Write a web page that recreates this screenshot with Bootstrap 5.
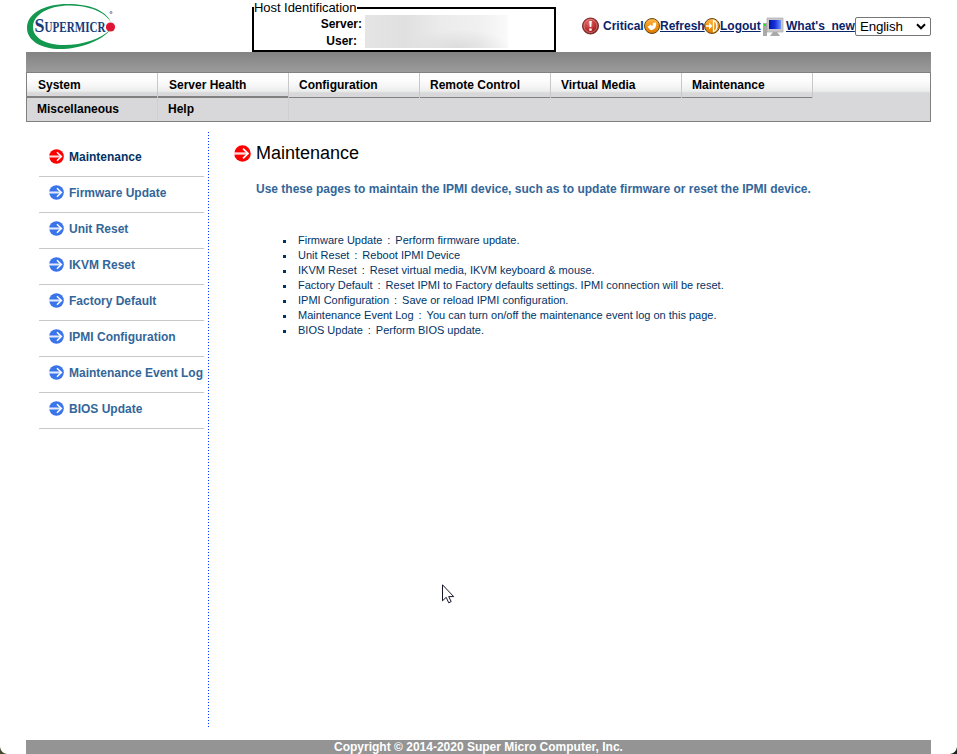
<!DOCTYPE html>
<html lang="en">
<head>
<meta charset="utf-8">
<meta name="viewport" content="width=device-width, initial-scale=1">
<title>Supermicro IPMI - Maintenance</title>
<link href="https://cdn.jsdelivr.net/npm/bootstrap@5.3.0/dist/css/bootstrap.min.css" rel="stylesheet">
<style>
body{font-family:"Liberation Sans",Arial,sans-serif;font-size:12px;line-height:16px;color:#000;background:#fff}
.page{width:905px;height:754px;margin-left:26px}
.masthead{height:52px}
.hostbox{width:304px;height:45px;margin:7px 0 0 134px;border:2px solid #000}
.host-title{left:0;top:-9px;line-height:16px;background:#fff;width:103px;height:16px;font-size:13px;letter-spacing:-.05px}
.host-labels{width:111px;padding-top:7px;line-height:17px}
.host-labels div:first-child{padding-right:3px}
.host-labels div:last-child{padding-right:8px}
.redacted{width:143px;height:33px;margin-top:6px;background:radial-gradient(ellipse at 65% 100%,rgba(216,216,216,.8),rgba(230,230,230,0) 40%),linear-gradient(90deg,#e5e5e5,#e0e0e0 28%,#ececec 55%,#f0f0f0 80%,#fafafa)}
.tools{width:349px;height:19px;margin-top:17px;color:#0a246a}
.tools a,.tools .state{color:#0a246a;line-height:18px;height:18px}
.t1{width:41px}
.t2{width:44px}
.t3{width:42px}
.alert-ball{margin-right:3px}
.lang{width:76px;height:19px;border:1px solid #767676;border-radius:2px;font-size:13.333px;letter-spacing:-.15px;line-height:17px;padding:0 4px;color:#000;background:#fff}
.topband{height:20px;background:linear-gradient(#838383,#9b9b9b)}
.menu{height:50px;border:1px solid #808080;background:linear-gradient(#fff 0,#fcfcfc 8px,#eceeed 18px,#d8d8da 20px)}
.menu-row{height:25px}
.menu-row + .menu-row{height:23px}
.menu-cell{width:131px;border-right:1px solid #c8c8c8;padding-left:10px;line-height:24px}
.menu-cell.deep{padding-left:11px}
.menu-row:first-child .menu-cell{box-shadow:inset 0 -1px #808080}
.menu-row:first-child .menu-cell.deep{box-shadow:inset 0 -2px #808080}
.menu-row + .menu-row .menu-cell{line-height:23px;border-color:#d0d0d2}
.workarea{height:618px;padding-top:10px}
.side{width:178px;padding:9px 0 0 13px}
.side a{width:165px;height:36px;padding:0 0 4px 10px;border-bottom:1px solid #c8c8c8;color:#336699}
.side a.current{color:#003366}
.side svg{margin-right:5px;color:#3974eb}
.side .current svg,.heading svg{color:#fe0000}
.dots{width:1px;height:596px;margin-left:4px;background:repeating-linear-gradient(#0033ff 0 1px,transparent 1px 3px)}
.content-pane{padding:9px 0 0 25px}
.heading{font-size:18px;line-height:24px;font-weight:400}
.heading svg{margin-right:5px}
.intro{margin:16px 0 0 22px;color:#336699;line-height:16px}
.features{margin:36px 0 0;padding-left:64px;font-size:11px;line-height:15px;color:#003366;list-style:none}
.features li::before{content:"";flex:none;width:3px;height:3px;margin:7px 12px 0 -15px;background:#003366}
.sep{width:13px;text-align:center}
.copyright{height:14px;line-height:14px;background:#949494;color:#fff}
.pointer{left:442px;top:584px}
.corner-l{left:0;bottom:0}
.corner-r{right:0;bottom:0}
</style>
<script src="https://cdn.jsdelivr.net/npm/bootstrap@5.3.0/dist/js/bootstrap.bundle.min.js"></script>
</head>
<body class="overflow-hidden">
<svg width="0" height="0" class="position-absolute">
<defs>
<linearGradient id="gold" x1="0" y1="0" x2="0" y2="1"><stop offset="0" stop-color="#ffb950"/><stop offset=".5" stop-color="#f29510"/><stop offset="1" stop-color="#d97800"/></linearGradient>
<radialGradient id="redball" cx=".4" cy=".3" r=".7"><stop offset="0" stop-color="#e36b6b"/><stop offset=".6" stop-color="#bd3030"/><stop offset="1" stop-color="#7d1515"/></radialGradient>
<linearGradient id="screen"><stop offset="0" stop-color="#0615a0"/><stop offset=".5" stop-color="#1730dd"/><stop offset="1" stop-color="#6e92ff"/></linearGradient>
<symbol id="arrow" viewBox="0 0 16 16"><circle cx="8" cy="8" r="7.8" fill="currentColor"/><path d="M0 8h13" stroke="#fff" stroke-width="2.200" stroke-opacity=".85"/><path d="M8.500 3.500 13.200 8l-4.700 4.500" fill="none" stroke="#fff" stroke-width="1.600"/></symbol>
</defs>
</svg>
<div class="page d-flex flex-column">
<header class="masthead d-flex flex-shrink-0">
<svg width="92" height="52" viewBox="0 0 92 52" class="flex-shrink-0">
<path fill="#149850" fill-rule="evenodd" d="M42 4C17 4 1 14 1 28c0 13 15 21 33 21 20 0 42-8 51-20-10 10-28 16-47 16C20 45 7 38 7 27 7 14 24 5 45 5.500c18 .5 34 6 40 17C80 10 63 4 42 4Z"/>
<g font-family="Liberation Serif" font-weight="700" fill="#173b78"><text x="8.500" y="32" font-size="18.500" textLength="10" lengthAdjust="spacingAndGlyphs">S</text><text x="18.500" y="32" font-size="14.500" textLength="61" lengthAdjust="spacingAndGlyphs">UPERMICR</text></g>
<circle cx="84.500" cy="27" r="4.600" fill="#e01435"/><circle cx="85" cy="12.500" r="1" fill="none" stroke="#173b78" stroke-width=".6"/>
</svg>
<div class="hostbox position-relative flex-shrink-0 d-flex">
<div class="host-title position-absolute text-nowrap">Host Identification</div>
<div class="host-labels fw-bold text-end"><div>Server:</div><div>User:</div></div>
<div class="redacted"></div>
</div>
<div class="tools d-flex align-items-start text-nowrap fw-bold ms-auto flex-shrink-0">
<svg width="18" height="18" viewBox="0 0 18 18" class="alert-ball flex-shrink-0"><circle cx="8.500" cy="9" r="8" fill="url(#redball)" stroke="#762a2a"/><circle cx="8.500" cy="9" r="6.500" fill="none" stroke="#eaa" stroke-width=".6"/><path d="M7.200 4h2.600l-.5 6H7.700zM7.300 11.500h2.400v2.300H7.300z" fill="#fff"/></svg>
<span class="state t1 flex-shrink-0">Critical</span>
<svg width="16" height="18" viewBox="0 0 16 18" class="flex-shrink-0"><circle cx="8" cy="9" r="7.500" fill="url(#gold)" stroke="#64491e"/><path d="M12 5.500c.8 5-1.600 7.500-5.500 7.500L3.500 10l3-2.500L8 9c1-.7 1-1.800.8-3z" fill="#fff"/></svg>
<a href="#" class="t2 flex-shrink-0">Refresh</a>
<svg width="16" height="18" viewBox="0 0 16 18" class="flex-shrink-0"><circle cx="8" cy="9" r="7.500" fill="url(#gold)" stroke="#64491e"/><path d="M2 9h5" stroke="#fff" stroke-width="1.500"/><path d="M5 5.500 8.500 9 5 12.500z" fill="#fff"/><path d="M9.500 3.500c4.500 1.500 4.500 9.500 0 11z" fill="none" stroke="#fff" stroke-width="1.300"/></svg>
<a href="#" class="t3 flex-shrink-0">Logout</a>
<svg width="24" height="20" viewBox="0 0 24 20" class="flex-shrink-0"><path d="M1 6h4v13H1z" fill="#aaa"/><path d="M2 8h2" stroke="#24e020" stroke-width="2"/><path d="M5 1h16v14H5z" fill="#c9c9c9" stroke="#aaa" stroke-width=".7"/><path d="M7 3h12v9H7z" fill="url(#screen)"/><path d="M11 15h4l3 4H8z" fill="#a9a9a9"/></svg>
<a href="#" class="t4">What's&nbsp; new</a>
<div class="lang d-flex justify-content-between align-items-center fw-normal ms-auto flex-shrink-0"><span>English</span><svg width="10" height="7" viewBox="0 0 10 7"><path d="m1 1.300 4 4 4-4" fill="none" stroke="#000" stroke-width="2"/></svg></div>
</div>
</header>
<div class="topband flex-shrink-0"></div>
<nav class="menu fw-bold flex-shrink-0">
<div class="menu-row d-flex"><div class="menu-cell deep">System</div><div class="menu-cell deep">Server Health</div><div class="menu-cell">Configuration</div><div class="menu-cell">Remote Control</div><div class="menu-cell">Virtual Media</div><div class="menu-cell">Maintenance</div></div>
<div class="menu-row d-flex"><div class="menu-cell">Miscellaneous</div><div class="menu-cell">Help</div></div>
</nav>
<main class="workarea d-flex flex-shrink-0">
<aside class="side fw-bold text-nowrap flex-shrink-0">
<a href="#" class="current d-flex align-items-center text-decoration-none"><svg width="15" height="15" class="flex-shrink-0"><use href="#arrow"/></svg>Maintenance</a>
<a href="#" class="d-flex align-items-center text-decoration-none"><svg width="15" height="15" class="flex-shrink-0"><use href="#arrow"/></svg>Firmware Update</a>
<a href="#" class="d-flex align-items-center text-decoration-none"><svg width="15" height="15" class="flex-shrink-0"><use href="#arrow"/></svg>Unit Reset</a>
<a href="#" class="d-flex align-items-center text-decoration-none"><svg width="15" height="15" class="flex-shrink-0"><use href="#arrow"/></svg>IKVM Reset</a>
<a href="#" class="d-flex align-items-center text-decoration-none"><svg width="15" height="15" class="flex-shrink-0"><use href="#arrow"/></svg>Factory Default</a>
<a href="#" class="d-flex align-items-center text-decoration-none"><svg width="15" height="15" class="flex-shrink-0"><use href="#arrow"/></svg>IPMI Configuration</a>
<a href="#" class="d-flex align-items-center text-decoration-none"><svg width="15" height="15" class="flex-shrink-0"><use href="#arrow"/></svg>Maintenance Event Log</a>
<a href="#" class="d-flex align-items-center text-decoration-none"><svg width="15" height="15" class="flex-shrink-0"><use href="#arrow"/></svg>BIOS Update</a>
</aside>
<div class="dots flex-shrink-0"></div>
<section class="content-pane flex-grow-1 text-nowrap">
<h1 class="heading d-flex align-items-center mb-0"><svg width="17" height="17"><use href="#arrow"/></svg>Maintenance</h1>
<p class="intro fw-bold mb-0">Use these pages to maintain the IPMI device, such as to update firmware or reset the IPMI device.</p>
<ul class="features">
<li class="d-flex">Firmware Update<span class="sep">:</span>Perform firmware update.</li>
<li class="d-flex">Unit Reset<span class="sep">:</span>Reboot IPMI Device</li>
<li class="d-flex">IKVM Reset<span class="sep">:</span>Reset virtual media, IKVM keyboard &amp; mouse.</li>
<li class="d-flex">Factory Default<span class="sep">:</span>Reset IPMI to Factory defaults settings. IPMI connection will be reset.</li>
<li class="d-flex">IPMI Configuration<span class="sep">:</span>Save or reload IPMI configuration.</li>
<li class="d-flex">Maintenance Event Log<span class="sep">:</span>You can turn on/off the maintenance event log on this page.</li>
<li class="d-flex">BIOS Update<span class="sep">:</span>Perform BIOS update.</li>
</ul>
</section>
</main>
<footer class="copyright fw-bold text-center flex-shrink-0">Copyright © 2014-2020 Super Micro Computer, Inc.</footer>
</div>
<svg class="pointer position-absolute" width="13" height="21" viewBox="0 0 13 21"><path d="M.5.8v16l3.700-3.500 2.500 5.500 2.500-1.200-2.500-5h5z" fill="#fff" stroke="#15152a"/></svg>
<svg class="corner-l position-absolute" width="7" height="7"><path d="M0 0q1 6 7 7H0z" fill="#414a2c"/></svg>
<svg class="corner-r position-absolute" width="7" height="7"><path d="M7 0q-1 6-7 7h7z" fill="#222"/></svg>
</body>
</html>
